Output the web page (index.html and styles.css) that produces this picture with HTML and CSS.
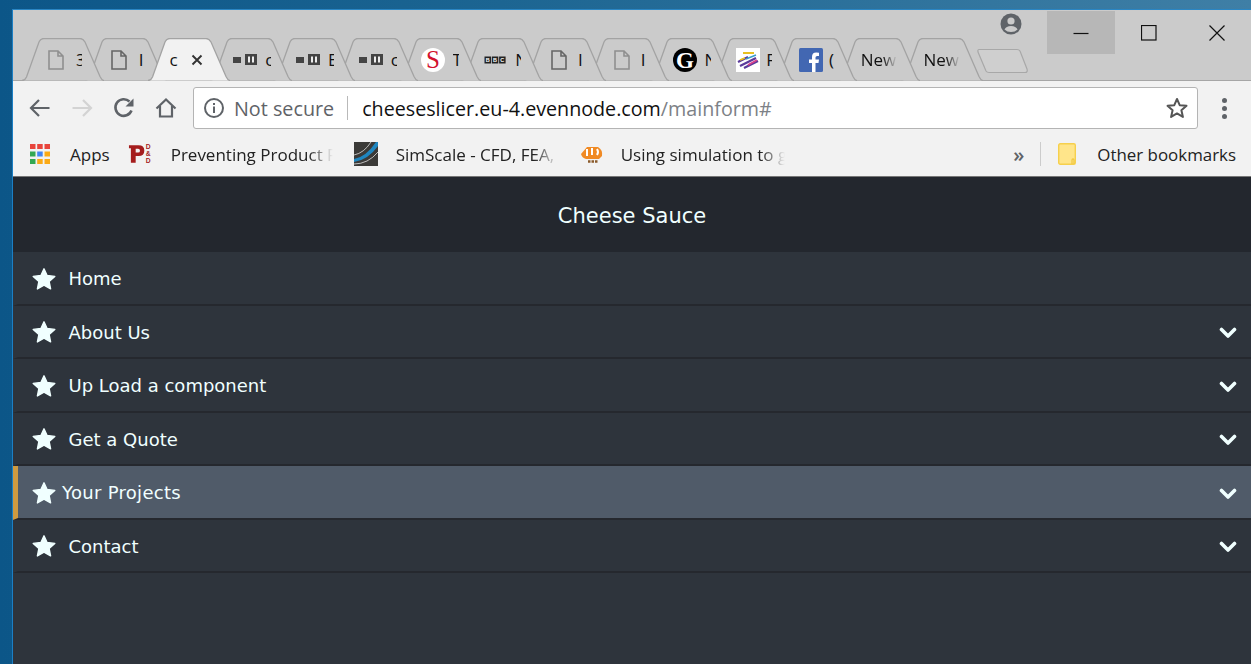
FILE: index.html
```html
<!DOCTYPE html>
<html lang="en">
<head>
<meta charset="utf-8">
<title>Cheese Sauce</title>
<link rel="stylesheet" href="styles.css">
</head>
<body>
<svg class="defs" width="0" height="0" aria-hidden="true">
  <defs>
    <symbol id="tabshape" viewBox="0 0 82 43" preserveAspectRatio="none"><path d="M0 42.500Q3 42.500 4.500 39L17 4Q18.500 .5 22 .5H58Q61 .5 63 4L78 38.500Q80 42.500 82 42.500"/></symbol>
    <symbol id="doc" viewBox="0 0 16 20"><path d="M1 1H10L15 6V19H1ZM10 1V6H15" fill="none" stroke="currentColor" stroke-width="1.600"/></symbol>
    <symbol id="media" viewBox="0 0 25 12"><rect x="0" y="3" width="8" height="6" fill="#444"/><rect x="12" y="0" width="12" height="11" fill="#444"/><rect x="15" y="2.500" width="2" height="6" fill="#eee"/><rect x="19" y="2.500" width="2" height="6" fill="#eee"/></symbol>
    <symbol id="star" viewBox="0 0 24 24"><path d="M12 1.800L15.100 8.500L22.800 9.400L17.100 14.500L18.600 21.900L12 18.200L5.400 21.900L6.900 14.500L1.200 9.400L8.900 8.500Z" fill="#f0ffff" stroke="#f0ffff" stroke-width="1.400" stroke-linejoin="round"/></symbol>
    <symbol id="chev" viewBox="0 0 18 12"><path d="M2.500 2.500L9 9L15.500 2.500" fill="none" stroke="#f0ffff" stroke-width="3.600" stroke-linecap="round" stroke-linejoin="round"/></symbol>
  </defs>
</svg>
<div class="window">
  <div class="tabstrip">
    <div class="tabs">
      <div class="tab"><svg class="shape"><use href="#tabshape"/></svg><svg class="fav doc faint"><use href="#doc"/></svg><span class="ttl">3</span></div>
      <div class="tab"><svg class="shape"><use href="#tabshape"/></svg><svg class="fav doc"><use href="#doc"/></svg><span class="ttl">I</span></div>
      <div class="tab active"><svg class="shape"><use href="#tabshape"/></svg><span class="ttl">c</span><svg class="tabx" viewBox="0 0 12 12"><path d="M1.500 1.500L10.500 10.500M10.500 1.500L1.500 10.500"/></svg></div>
      <div class="tab"><svg class="shape"><use href="#tabshape"/></svg><svg class="fav wide"><use href="#media"/></svg><span class="ttl">c</span></div>
      <div class="tab"><svg class="shape"><use href="#tabshape"/></svg><svg class="fav wide"><use href="#media"/></svg><span class="ttl">E</span></div>
      <div class="tab"><svg class="shape"><use href="#tabshape"/></svg><svg class="fav wide"><use href="#media"/></svg><span class="ttl">c</span></div>
      <div class="tab"><svg class="shape"><use href="#tabshape"/></svg><svg class="fav" viewBox="0 0 24 24"><circle cx="12" cy="12" r="12" fill="#fff"/><text x="12" y="20" class="s-mark">S</text></svg><span class="ttl">T</span></div>
      <div class="tab"><svg class="shape"><use href="#tabshape"/></svg><svg class="fav" viewBox="0 0 24 24"><rect x="1.500" y="8.500" width="6.500" height="7" fill="#222"/><rect x="8.800" y="8.500" width="6.500" height="7" fill="#222"/><rect x="16.100" y="8.500" width="6.500" height="7" fill="#222"/><text x="4.750" y="14.300" class="bbc">B</text><text x="12.050" y="14.300" class="bbc">B</text><text x="19.350" y="14.300" class="bbc">C</text></svg><span class="ttl">N</span></div>
      <div class="tab"><svg class="shape"><use href="#tabshape"/></svg><svg class="fav doc"><use href="#doc"/></svg><span class="ttl">I</span></div>
      <div class="tab"><svg class="shape"><use href="#tabshape"/></svg><svg class="fav doc faint"><use href="#doc"/></svg><span class="ttl">I</span></div>
      <div class="tab"><svg class="shape"><use href="#tabshape"/></svg><svg class="fav" viewBox="0 0 24 24"><circle cx="12" cy="12" r="12" fill="#000"/><text x="12" y="20" class="g-mark">G</text></svg><span class="ttl">N</span></div>
      <div class="tab"><svg class="shape"><use href="#tabshape"/></svg><svg class="fav" viewBox="0 0 24 24"><rect width="24" height="24" fill="#fff"/><path d="M2 14L12 9M4 18L20 10M8 20L22 13" stroke="#5b3a9c" stroke-width="2.200"/><path d="M7 5L18 5M4 12L9 10" stroke="#e8c020" stroke-width="1.800"/><path d="M12 17L21 12" stroke="#d8408c" stroke-width="1.800"/><path d="M10 11L20 7" stroke="#3a9cc8" stroke-width="1.500"/></svg><span class="ttl">F</span></div>
      <div class="tab"><svg class="shape"><use href="#tabshape"/></svg><svg class="fav" viewBox="0 0 24 24"><rect width="24" height="24" rx="1.500" fill="#4267b2"/><path d="M16.500 24V15H19.500L20 11.500H16.500V9.500Q16.500 8 18.200 8H20V4.800Q18.800 4.600 17.300 4.600Q13 4.600 13 9V11.500H10V15H13V24Z" fill="#fff"/></svg><span class="ttl">(</span></div>
      <div class="tab plain"><svg class="shape"><use href="#tabshape"/></svg><span class="ttl">New</span></div>
      <div class="tab plain"><svg class="shape"><use href="#tabshape"/></svg><span class="ttl">New</span></div>
    </div>
    <svg class="newtab" viewBox="0 0 52 26"><path d="M2 1.500H40Q42 1.500 43 3L50 21Q51 24.500 48 24.500H12Q10 24.500 9 23L1 4Q.5 1.500 2 1.500Z"/></svg>
    <svg class="avatar" viewBox="0 0 22 22"><circle cx="11" cy="11" r="10.500" fill="#5f6368"/><circle cx="11" cy="8" r="3.600" fill="#cbcbcb"/><path d="M4.500 16.500Q6 13 11 13Q16 13 17.500 16.500Q15 19 11 19Q7 19 4.500 16.500Z" fill="#cbcbcb"/></svg>
    <div class="caption">
      <div class="capbtn hover"><svg class="capico" viewBox="0 0 16 16"><path d="M.5 8.500H15.500"/></svg></div>
      <div class="capbtn"><svg class="capico" viewBox="0 0 16 16"><rect x=".5" y=".5" width="14.500" height="14.500"/></svg></div>
      <div class="capbtn"><svg class="capico" viewBox="0 0 16 16"><path d="M.5 .5L15.500 15.500M15.500 .5L.5 15.500"/></svg></div>
    </div>
  </div>
  <div class="toolbar">
    <svg class="tool" viewBox="0 0 22 22"><path d="M20.500 11H2M10 3L2 11L10 19" class="tl"/></svg>
    <svg class="tool off" viewBox="0 0 22 22"><path d="M1.500 11H20M12 3L20 11L12 19" class="tl"/></svg>
    <svg class="tool" viewBox="0 0 22 22"><path d="M18.500 13.500A8.300 8.300 0 1 1 16.500 4.500" class="tl thick"/><path d="M12.500 9.500H20.500V1.500Z" fill="#5f6368"/></svg>
    <svg class="tool" viewBox="0 0 22 22"><path d="M1.500 11.500L11 2.500L20.500 11.500M5 9V19.500H17V9" class="tl"/></svg>
    <div class="omnibox">
      <svg class="info" viewBox="0 0 22 22"><circle cx="11" cy="11" r="9" fill="none" stroke="#5f6368" stroke-width="2"/><rect x="10" y="9.500" width="2" height="6.500" fill="#5f6368"/><rect x="10" y="6" width="2" height="2" fill="#5f6368"/></svg>
      <span class="insecure">Not secure</span>
      <span class="sep"></span>
      <span class="url">cheeseslicer.eu-4.evennode.com<span class="path">/mainform#</span></span>
      <svg class="bookmark" viewBox="0 0 24 24"><path d="M12 3L14.700 9.200L21.500 9.800L16.400 14.300L17.900 20.900L12 17.400L6.100 20.900L7.600 14.300L2.500 9.800L9.300 9.200Z" fill="none" stroke="#555" stroke-width="2" stroke-linejoin="round"/></svg>
    </div>
    <div class="menu"><i></i><i></i><i></i></div>
  </div>
  <div class="bookmarks">
    <svg class="apps" viewBox="0 0 20 20"><rect width="5.500" height="5" fill="#e8453c"/><rect x="7.200" width="5.500" height="5" fill="#e8453c"/><rect x="14.500" width="5.500" height="5" fill="#e8453c"/><rect y="7.500" width="5.500" height="5" fill="#34a853"/><rect x="7.200" y="7.500" width="5.500" height="5" fill="#4285f4"/><rect x="14.500" y="7.500" width="5.500" height="5" fill="#fbaa16"/><rect y="15" width="5.500" height="5" fill="#34a853"/><rect x="7.200" y="15" width="5.500" height="5" fill="#fbaa16"/><rect x="14.500" y="15" width="5.500" height="5" fill="#fbaa16"/></svg>
    <span class="bm apps-l">Apps</span>
    <svg class="bmi pdd" viewBox="0 0 25 24"><path d="M1 3H11Q17 3 17 8.500Q17 14 11 14H8V21H3V6H1ZM8 6.500V10.500H10.500Q12.500 10.500 12.500 8.500Q12.500 6.500 10.500 6.500Z" fill="#a51d1d" fill-rule="evenodd"/><text x="21" y="7" class="dd">D</text><text x="21" y="14" class="dd">&amp;</text><text x="21" y="21" class="dd">D</text></svg>
    <span class="bm fade w-prev">Preventing Product Failure</span>
    <svg class="bmi sim" viewBox="0 0 24 24"><rect width="24" height="24" fill="#3b3a38"/><path d="M0 17Q12 15 22 0H24V4Q14 18 0 20Z" fill="#1f86c0"/><path d="M0 22Q14 22 24 10" stroke="#ddd" stroke-width=".8" fill="none"/><path d="M0 13Q10 11 17 0" stroke="#ddd" stroke-width=".8" fill="none"/></svg>
    <span class="bm fade w-sim">SimScale - CFD, FEA, and</span>
    <svg class="bmi three" viewBox="0 0 24 24"><path d="M1 12L7 5H18Q23 8 22 14L19 17H6Q2 16 1 12Z" fill="#f08a24"/><path d="M7 7V14M12 6V13M17 7Q19 10 17 13" stroke="#fff" stroke-width="2" fill="none"/><path d="M8 19.500H18" stroke="#8a5a2a" stroke-width="2.400" stroke-dasharray="2.500 1"/></svg>
    <span class="bm fade w-use">Using simulation to get</span>
    <span class="more">»</span>
    <span class="bmsep"></span>
    <svg class="folder" viewBox="0 0 18 22"><rect x=".7" y=".7" width="16.600" height="20.600" rx="1.500" fill="#ffe58a" stroke="#f6d04d" stroke-width="1.400"/><path d="M14 21V17Q14 15.800 15 15.800Q16 15.800 16 17V21" fill="none" stroke="#f0c63e" stroke-width="1.200"/></svg>
    <span class="bm other">Other bookmarks</span>
  </div>
  <main class="page">
    <header class="head">Cheese Sauce</header>
    <nav class="nav">
      <a class="row"><svg class="star"><use href="#star"/></svg><span>Home</span></a>
      <a class="row"><svg class="star"><use href="#star"/></svg><span>About Us</span><svg class="chev"><use href="#chev"/></svg></a>
      <a class="row"><svg class="star"><use href="#star"/></svg><span>Up Load a component</span><svg class="chev"><use href="#chev"/></svg></a>
      <a class="row"><svg class="star"><use href="#star"/></svg><span>Get a Quote</span><svg class="chev"><use href="#chev"/></svg></a>
      <a class="row current"><svg class="star"><use href="#star"/></svg><span>Your Projects</span><svg class="chev"><use href="#chev"/></svg></a>
      <a class="row"><svg class="star"><use href="#star"/></svg><span>Contact</span><svg class="chev"><use href="#chev"/></svg></a>
    </nav>
  </main>
</div>
</body>
</html>
```
FILE: styles.css
```css
html, body { height: 100%; }
body {
  margin: 0;
  overflow: hidden;
  background: linear-gradient(90deg, #0c5688 0%, #1c6592 40%, #3f7fa6 100%);
  font-family: "Open Sans", "Noto Sans", sans-serif;
}
.defs { position: absolute; }
.window {
  box-sizing: border-box;
  height: 655px;
  margin: 9px 0 0 12px;
  border-left: 1px solid #1c7fc4;
  border-top: 1px solid #2a86c4;
  display: flex;
  flex-direction: column;
  overflow: hidden;
}

/* tab strip */
.tabstrip {
  flex: none;
  height: 71px;
  box-sizing: border-box;
  background: #cbcbcb;
  border-bottom: 1px solid #a6a6a6;
  display: flex;
  align-items: flex-start;
  padding-left: 9px;
}
.tabs {
  display: flex;
  align-self: flex-end;
  margin-bottom: -1px;
}
.tab {
  position: relative;
  flex: none;
  box-sizing: border-box;
  width: 82px;
  height: 43px;
  margin-right: -19.250px;
  display: flex;
  align-items: center;
  padding-left: 22px;
  gap: 8px;
  font-size: 17px;
  color: #111;
}
.tab > .fav, .tab > .ttl, .tab > .tabx { position: relative; }
.tab:nth-child(1) { z-index: 15; }
.tab:nth-child(2) { z-index: 14; }
.tab:nth-child(3) { z-index: 20; }
.tab:nth-child(4) { z-index: 12; }
.tab:nth-child(5) { z-index: 11; }
.tab:nth-child(6) { z-index: 10; }
.tab:nth-child(7) { z-index: 9; }
.tab:nth-child(8) { z-index: 8; }
.tab:nth-child(9) { z-index: 7; }
.tab:nth-child(10) { z-index: 6; }
.tab:nth-child(11) { z-index: 5; }
.tab:nth-child(12) { z-index: 4; }
.tab:nth-child(13) { z-index: 3; }
.tab:nth-child(14) { z-index: 2; }
.tab:nth-child(15) { z-index: 1; }
.shape {
  position: absolute;
  left: 0;
  top: 0;
  width: 82px;
  height: 43px;
  fill: #cbcbcb;
  stroke: #a3a3a3;
  stroke-width: 1.300;
}
.active .shape { fill: #f2f2f2; }
.fav { flex: none; width: 24px; height: 24px; margin-left: 0; }
.fav.wide { width: 25px; height: 12px; margin: 0 -1px 0 1px; }
.fav.doc { width: 16px; height: 20px; margin: 0 4px 0 4px; color: #666; }
.fav.doc.faint { color: #8f8f8f; }
.tab:nth-child(n+9) .fav { margin-left: 1px; }
.tab:nth-child(9) .fav.doc, .tab:nth-child(10) .fav.doc { margin-left: 5px; margin-right: 3px; }
.tab:nth-child(n+12) .fav { margin-left: 2px; margin-right: -2px; }
.ttl {
  flex: none;
  width: 6px;
  overflow: hidden;
  white-space: nowrap;
}
.active .ttl { width: 8px; }
.plain { padding-left: 23px; }
.plain .ttl {
  width: 36px;
  -webkit-mask-image: linear-gradient(90deg, #000 60%, transparent 100%);
  mask-image: linear-gradient(90deg, #000 60%, transparent 100%);
}
.tabx {
  width: 12px;
  height: 12px;
  margin-left: 5px;
  fill: none;
  stroke: #333;
  stroke-width: 1.900;
}
.newtab {
  flex: none;
  align-self: flex-end;
  width: 52px;
  height: 26px;
  margin: 0 0 6px 14px;
  fill: #cfcfcf;
  stroke: #a8a8a8;
  stroke-width: 1.200;
}
.avatar {
  flex: none;
  width: 22px;
  height: 22px;
  margin: 3px 0 0 -29px;
}
.caption {
  margin-left: auto;
  display: flex;
  margin-top: 1px;
}
.capbtn {
  width: 68px;
  height: 43px;
  display: flex;
  align-items: center;
  justify-content: center;
}
.capbtn.hover { background: #b7b7b7; }
.capico {
  width: 16px;
  height: 16px;
  fill: none;
  stroke: #111;
  stroke-width: 1.200;
  margin-top: 1px;
}

/* toolbar */
.toolbar {
  flex: none;
  height: 51px;
  box-sizing: border-box;
  background: #f2f2f2;
  display: flex;
  align-items: center;
  padding: 3px 13px 0 16px;
}
.tool {
  flex: none;
  width: 22px;
  height: 22px;
  margin-right: 20px;
}
.tool:nth-child(4) { margin-right: 16px; }
.tl {
  fill: none;
  stroke: #5f6368;
  stroke-width: 2.200;
}
.tl.thick { stroke-width: 2.600; }
.off .tl { stroke: #d3d3d3; }
.omnibox {
  flex: 1;
  height: 42px;
  box-sizing: border-box;
  display: flex;
  align-items: center;
  background: #fff;
  border: 1px solid #b4b4b4;
  border-radius: 3px;
  padding: 0 8px 0 9px;
}
.info { flex: none; width: 22px; height: 22px; margin-right: 9px; }
.insecure { color: #5f6368; font-size: 19.750px; }
.sep { width: 1px; height: 24px; background: #b9b9b9; margin: 0 14px 0 13px; }
.url { color: #111; font-size: 19.700px; white-space: nowrap; }
.path { color: #7d8186; }
.bookmark { flex: none; width: 24px; height: 24px; margin-left: auto; }
.menu {
  flex: none;
  width: 28px;
  margin-left: 12px;
  display: flex;
  flex-direction: column;
  align-items: center;
  gap: 3px;
}
.menu i { width: 5px; height: 5px; border-radius: 50%; background: #5f6368; }

/* bookmarks */
.bookmarks {
  flex: none;
  height: 45px;
  box-sizing: border-box;
  background: #f2f2f2;
  border-bottom: 1px solid #777;
  display: flex;
  align-items: center;
  padding: 0 15px 0 17px;
  font-size: 17px;
  color: #222;
}
.apps { flex: none; width: 20px; height: 20px; margin-right: 20px; }
.bm { white-space: nowrap; }
.apps-l { margin-right: 18px; }
.bmi { flex: none; width: 24px; height: 24px; }
.pdd { margin-right: 19px; }
.sim { margin-right: 18px; }
.three { margin-right: 17px; }
.fade {
  flex: none;
  overflow: hidden;
  -webkit-mask-image: linear-gradient(90deg, #000 85%, transparent 100%);
  mask-image: linear-gradient(90deg, #000 85%, transparent 100%);
}
.w-prev { width: 162px; margin-right: 21px; }
.w-sim { width: 162px; margin-right: 22px; }
.w-use { width: 164px; }
.more { margin-left: auto; font-size: 20px; font-weight: 600; color: #5f6368; margin-right: 16px; }
.bmsep { width: 1px; height: 24px; background: #ccc; margin-right: 17px; }
.folder { flex: none; width: 18px; height: 22px; margin-right: 21px; }
.other { font-size: 16.900px; }
.dd { font: 700 7px "Liberation Sans", sans-serif; fill: #a51d1d; text-anchor: middle; }
.s-mark { font: 400 25px "Liberation Serif", serif; fill: #d3122e; text-anchor: middle; }
.g-mark { font: 700 23px "Liberation Serif", serif; fill: #fff; text-anchor: middle; }
.bbc { font: 700 5.500px "Liberation Sans", sans-serif; fill: #fff; text-anchor: middle; }

/* page */
.page {
  flex: 1;
  background: #2e343c;
  font-family: "DejaVu Sans", sans-serif;
  color: #f0ffff;
}
.head {
  height: 75px;
  box-sizing: border-box;
  padding-top: 2px;
  background: #23272e;
  display: flex;
  align-items: center;
  justify-content: center;
  font-size: 21px;
}
.row {
  box-sizing: border-box;
  height: 53.500px;
  display: flex;
  align-items: center;
  border-left: 5px solid transparent;
  border-bottom: 2px solid #25282e;
  padding: 2px 14px 0;
  font-size: 18px;
  font-weight: 400;
}
.star { flex: none; width: 24px; height: 24px; margin-right: 13px; margin-left: -.5px; }
.chev { flex: none; width: 18px; height: 12px; margin-left: auto; position: relative; top: 1px; }
.current { background: #505b69; border-left-color: #cf9b40; }
.current .star { margin-right: 6.500px; }
.current span { letter-spacing: .3px; }
```
